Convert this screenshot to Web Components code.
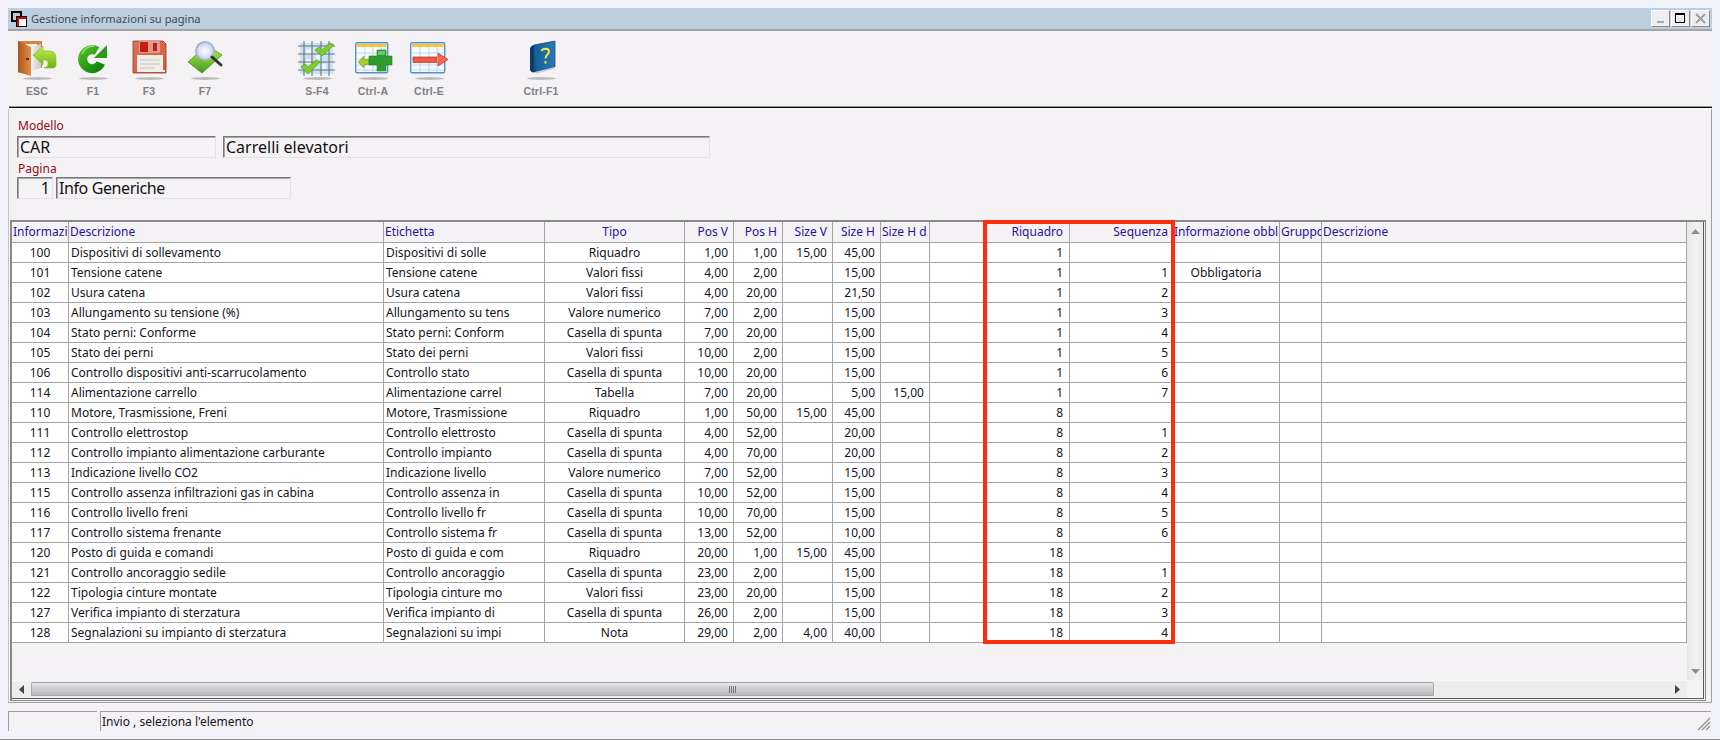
<!DOCTYPE html>
<html lang="it">
<head>
<meta charset="utf-8">
<title>Gestione informazioni su pagina</title>
<style>
    html, body { margin: 0; padding: 0; background: #f3f3fb; }
    body { width: 1720px; height: 740px; overflow: hidden; font-family: "Noto Sans", sans-serif; }
</style>
</head>
<body>
<app-window>
    <title-bar slot="title">Gestione informazioni su pagina</title-bar>
    <tool-bar slot="tools">
        <tool-button label="ESC" icon="door"></tool-button>
        <tool-button label="F1" icon="refresh"></tool-button>
        <tool-button label="F3" icon="save"></tool-button>
        <tool-button label="F7" icon="search"></tool-button>
        <tool-spacer></tool-spacer>
        <tool-button label="S-F4" icon="checks"></tool-button>
        <tool-button label="Ctrl-A" icon="add"></tool-button>
        <tool-button label="Ctrl-E" icon="remove"></tool-button>
        <tool-spacer></tool-spacer>
        <tool-button label="Ctrl-F1" icon="book"></tool-button>
    </tool-bar>
    <model-form slot="form"></model-form>
    <data-grid slot="grid"></data-grid>
    <status-bar slot="status">Invio , seleziona l'elemento</status-bar>
</app-window>

<script>
const ICONS = {
    door: `<svg viewBox="0 0 40 36" width="40" height="36">
        <defs>
            <linearGradient id="d1" x1="0" x2="1"><stop offset="0" stop-color="#a9551c"/><stop offset="1" stop-color="#e58f45"/></linearGradient>
            <linearGradient id="d2" x1="0" x2="1"><stop offset="0" stop-color="#f3f3f3"/><stop offset="1" stop-color="#c9c9c9"/></linearGradient>
            <linearGradient id="d3" x1="0" x2="0" y1="0" y2="1"><stop offset="0" stop-color="#c9ee55"/><stop offset="1" stop-color="#6ab410"/></linearGradient>
        </defs>
        <path d="M1 1H25V28H20V4H5V30L1 33Z" fill="#d9813a"/>
        <path d="M1 1L14 7V36L1 32Z" fill="url(#d1)"/>
        <path d="M14 7L24 4V28L14 31Z" fill="url(#d2)"/>
        <rect x="9" y="18" width="3" height="2" fill="#5b2c0a"/>
        <path d="M16 15L26 6V11H33C38 11 39 15 39 20V25C39 27 37 28 36 28H27C31 27 31 25 31 23C31 21 30 20 28 20H26V25Z" fill="url(#d3)" stroke="#7cb71c" stroke-width=".6"/>
    </svg>`,
    refresh: `<svg viewBox="0 0 40 36" width="40" height="36">
        <defs><linearGradient id="r1" gradientUnits="userSpaceOnUse" x1="6" y1="5" x2="30" y2="33"><stop offset="0" stop-color="#58c82c"/><stop offset="1" stop-color="#067a06"/></linearGradient></defs>
        <path d="M27.800 23A9.500 9.500 0 1 1 24 11" fill="none" stroke="url(#r1)" stroke-width="9"/>
        <path d="M34 5V18H21Z" fill="#2c9a18"/>
        <path d="M9 14C11 9 16 6 21 6" fill="none" stroke="#b3ec8a" stroke-width="1.600" opacity=".75"/>
    </svg>`,
    save: `<svg viewBox="0 0 40 36" width="40" height="36">
        <defs><linearGradient id="s1" x1="0" x2="1" y1="0" y2="1"><stop offset="0" stop-color="#e0705a"/><stop offset="1" stop-color="#d85a38"/></linearGradient></defs>
        <path d="M4 1H34L37 4V33H4Z" fill="url(#s1)" stroke="#8a3a26" stroke-width=".8"/>
        <rect x="10" y="1" width="21" height="12" fill="#d89c90"/>
        <rect x="11" y="2" width="8" height="10" fill="#c42010"/>
        <rect x="24" y="3" width="4" height="8" fill="#c42010"/>
        <rect x="8" y="15" width="26" height="17" fill="#f1eeea"/>
        <path d="M11 20H31M11 24H31M11 28H26" stroke="#c8c4be" stroke-width="1.200"/>
        <rect x="34" y="30" width="2" height="2" fill="#eee"/>
    </svg>`,
    search: `<svg viewBox="0 0 40 36" width="40" height="36">
        <defs>
            <linearGradient id="f1" x1="0" x2="0" y1="0" y2="1"><stop offset="0" stop-color="#a5e64a"/><stop offset="1" stop-color="#3f9c12"/></linearGradient>
            <radialGradient id="f2"><stop offset="0" stop-color="#ffffff"/><stop offset="1" stop-color="#c3d2f0"/></radialGradient>
        </defs>
        <path d="M3 22L11 15L17 21L29 10L37 15L17 33Z" fill="url(#f1)" stroke="#3a8a12" stroke-width=".7"/>
        <circle cx="20" cy="11" r="9" fill="url(#f2)" stroke="#a4b6c2" stroke-width="2"/>
        <path d="M27 17L36 25" stroke="#333" stroke-width="3" stroke-linecap="round"/>
    </svg>`,
    checks: `<svg viewBox="0 0 40 36" width="40" height="36">
        <rect x="3" y="3" width="33" height="31" fill="#c9e2f8"/>
        <path d="M9 9h5v5H9zM19 14h5v5h-5zM9 19h5v5H9zM24 24h5v5h-5z" fill="#eef6fd"/>
        <path d="M1 6H38M1 14H38M1 22H38M1 30H38M7 1V36M15 1V36M24 1V36M32 1V36" stroke="#6b7478" stroke-width="1.100" fill="none"/>
        <path d="M18 10L22 7L25 10L33 3L37 5L25 16Z" fill="#7ccc2a" stroke="#4c9a12" stroke-width=".6"/>
        <path d="M4 27L8 24L11 27L19 20L23 22L11 34Z" fill="#7ccc2a" stroke="#4c9a12" stroke-width=".6"/>
    </svg>`,
    add: `<svg viewBox="0 0 40 36" width="40" height="36">
        <rect x="2.700" y="2.700" width="32" height="30" rx="1.500" fill="#f8fbfe" stroke="#4f93cb" stroke-width="1.400"/>
        <rect x="4" y="4" width="29.500" height="3" fill="#f3c440"/>
        <path d="M4 13H34M4 19H34M4 25H34M4 30H34M12 7V32M20 7V32M28 7V32" stroke="#bcd4ea" stroke-width="1"/>
        <path d="M5 22L11 16V19.500H16V24.500H11V28Z" fill="#a5cc2a" stroke="#70981a" stroke-width=".6"/>
        <path d="M24 10H33V16H39V25H33V31H24V25H16V16H24Z" fill="#2f9c30" stroke="#1f7f22" stroke-width=".6"/>
        <path d="M25 11H32V15H25Z" fill="#70c46c"/>
    </svg>`,
    remove: `<svg viewBox="0 0 40 36" width="40" height="36">
        <rect x="1.700" y="2.700" width="34" height="30" rx="1.500" fill="#f8fbfe" stroke="#4f93cb" stroke-width="1.400"/>
        <rect x="3" y="4" width="31.500" height="3" fill="#f3c440"/>
        <path d="M3 13H35M3 19H35M3 25H35M3 30H35M11 7V32M20 7V32M28 7V32" stroke="#bcd4ea" stroke-width="1"/>
        <rect x="4" y="17" width="24" height="5.500" fill="#ef5a44" stroke="#c03020" stroke-width=".7"/>
        <path d="M29 17V13L39 19.500L29 26V22" fill="#f86a4c" stroke="#c03020" stroke-width=".7"/>
    </svg>`,
    book: `<svg viewBox="0 0 40 36" width="40" height="36">
        <defs><linearGradient id="b1" x1="0" x2="1"><stop offset="0" stop-color="#125f96"/><stop offset="1" stop-color="#2c7ab4"/></linearGradient></defs>
        <path d="M13 5L34 1V27L14 32Z" fill="url(#b1)" stroke="#0c3f68" stroke-width=".7"/>
        <path d="M9 8C10 6 12 5 13 5L14 32C12 33 10 32 9 30Z" fill="#0a3e6a"/>
        <path d="M14 32L34 27V28.500L15 34Z" fill="#c9ced4"/>
        <path d="M20.500 11C21.500 8 28 7.500 28 11.500C28 14.500 24.500 14.500 24.500 18.500M24.500 21V23.500" fill="none" stroke="#f2e34a" stroke-width="2"/>
    </svg>`
};

class AppWindow extends HTMLElement {
    constructor() {
        super();
        this.attachShadow({ mode: 'open' });
        this.shadowRoot.innerHTML = `
            <style>
                :host { display: block; box-sizing: border-box; width: 1720px; height: 740px; padding: 8px 8px 0 8px; border-bottom: 1px solid #8b8b8b; }
                .panel { display: flex; flex-direction: column; height: 723px; background: #f5f2f6; }
                .rule { height: 1px; background: #000; border-bottom: 1px solid #fff; box-shadow: 0 -1px 0 #9a9a9a; margin-left: 1px; }
                .lower { box-sizing: border-box; height: 593px; border-left: 1px solid #c6c6ca; border-right: 1px solid #a0a0a0; }
                .grid { padding-left: 1px; }
            </style>
            <div class="panel">
                <slot name="title"></slot>
                <slot name="tools"></slot>
                <div class="rule"></div>
                <div class="lower">
                    <slot name="form"></slot>
                    <div class="grid"><slot name="grid"></slot></div>
                </div>
                <slot name="status"></slot>
            </div>`;
    }
}

class TitleBar extends HTMLElement {
    constructor() {
        super();
        this.attachShadow({ mode: 'open' });
        this.shadowRoot.innerHTML = `
            <style>
                :host { display: flex; align-items: center; box-sizing: border-box; height: 23px; background: #bccfdf; border-bottom: 2px solid #a3a3a8; color: #454a55; font: 11.150px "Noto Sans", sans-serif; }
                .logo { width: 16px; height: 16px; margin: 0 4px 0 3px; }
                .text { flex: 1; }
                .ctl { display: flex; gap: 1px; margin-right: 2px; }
                .btn { box-sizing: border-box; width: 19px; height: 17px; background: #eeeef0; border: 1px solid; border-color: #fff #8a8a8a #8a8a8a #fff; display: flex; align-items: center; justify-content: center; }
            </style>
            <svg class="logo" viewBox="0 0 16 16">
                <rect x="1" y="1" width="9" height="9" fill="#c8c8c8" stroke="#000" stroke-width="2"/>
                <rect x="5" y="5" width="11" height="11" fill="#000"/>
                <rect x="6" y="6" width="9" height="9" fill="#d80000"/>
                <rect x="8" y="8" width="7" height="7" fill="#fff"/>
            </svg>
            <span class="text"><slot></slot></span>
            <div class="ctl">
                <div class="btn"><svg width="11" height="11"><rect x="2" y="8" width="7" height="2" fill="#a8a8a8"/></svg></div>
                <div class="btn"><svg width="13" height="13"><rect x="1.500" y="1.500" width="9" height="9" fill="none" stroke="#000"/><rect x="1" y="1" width="10" height="2" fill="#000"/></svg></div>
                <div class="btn"><svg width="11" height="11"><path d="M1 1L10 10M10 1L1 10" stroke="#a0a0a0" stroke-width="2"/></svg></div>
            </div>`;
    }
}

class ToolBar extends HTMLElement {
    constructor() {
        super();
        this.attachShadow({ mode: 'open' });
        this.shadowRoot.innerHTML = `
            <style>
                :host { display: flex; height: 76px; padding-left: 1px; }
            </style>
            <slot></slot>`;
    }
}

class ToolSpacer extends HTMLElement {
    constructor() {
        super();
        this.attachShadow({ mode: 'open' });
        this.shadowRoot.innerHTML = `<style>:host { display: block; width: 56px; }</style>`;
    }
}

class ToolButton extends HTMLElement {
    constructor() {
        super();
        this.attachShadow({ mode: 'open' });
        this.shadowRoot.innerHTML = `
            <style>
                :host { display: flex; flex-direction: column; align-items: center; width: 56px; padding-top: 9px; box-sizing: border-box; }
                .pic { height: 36px; }
                .shadow { width: 29px; height: 3px; border-radius: 50%; background: #bdbdbd; margin-top: 1px; filter: blur(.5px); }
                .label { margin-top: 5px; font: bold 10.500px "Liberation Sans", sans-serif; color: #808080; letter-spacing: .2px; }
            </style>
            <div class="pic">${ICONS[this.getAttribute('icon')]}</div>
            <div class="shadow"></div>
            <div class="label">${this.getAttribute('label')}</div>`;
    }
}

class ModelField extends HTMLElement {
    constructor() {
        super();
        this.attachShadow({ mode: 'open' });
        this.shadowRoot.innerHTML = `
            <style>
                :host { display: block; box-sizing: border-box; height: 22px; padding: 0 2px; border: 1px solid; border-color: #777 #e4e2e6 #e4e2e6 #777; box-shadow: inset 1px 1px 0 #a8a8a8; font: 16px/20px "Noto Sans", sans-serif; color: #111; white-space: nowrap; overflow: hidden; }
                :host([num]) { text-align: right; }
            </style>
            <slot></slot>`;
    }
}

class ModelForm extends HTMLElement {
    constructor() {
        super();
        this.attachShadow({ mode: 'open' });
        this.shadowRoot.innerHTML = `
            <style>
                :host { display: block; box-sizing: border-box; height: 111px; padding: 8px 0 0 8px; }
                .label { height: 17px; padding-left: 1px; color: #8e0d14; font: 12px/17px "Noto Sans", sans-serif; }
                .row { display: flex; margin-top: 2px; }
                .second { margin-top: 2px; }
                .second + .row { margin-top: 0; }
            </style>
            <div class="label">Modello</div>
            <div class="row">
                <model-field style="width:199px;margin-right:7px">CAR</model-field>
                <model-field style="width:487px">Carrelli elevatori</model-field>
            </div>
            <div class="label second">Pagina</div>
            <div class="row">
                <model-field num style="width:36px;margin-right:3px">1</model-field>
                <model-field style="width:235px;letter-spacing:-.4px">Info Generiche</model-field>
            </div>`;
    }
}

const COLUMNS = [
    { t: 'Informazi', w: 57, h: 'left', a: 'center' },
    { t: 'Descrizione', w: 315, h: 'left', a: 'left' },
    { t: 'Etichetta', w: 161, h: 'left', a: 'left' },
    { t: 'Tipo', w: 140, h: 'center', a: 'center' },
    { t: 'Pos V', w: 49, h: 'right', a: 'right' },
    { t: 'Pos H', w: 49, h: 'right', a: 'right' },
    { t: 'Size V', w: 50, h: 'right', a: 'right' },
    { t: 'Size H', w: 48, h: 'right', a: 'right' },
    { t: 'Size H d', w: 49, h: 'left', a: 'right' },
    { t: '', w: 54, h: 'left', a: 'left' },
    { t: 'Riquadro', w: 86, h: 'right', a: 'right', pad: 6 },
    { t: 'Sequenza', w: 103, h: 'right', a: 'right', pad: 4 },
    { t: 'Informazione obbl', w: 107, h: 'left', a: 'center' },
    { t: 'Gruppo', w: 42, h: 'left', a: 'left' },
    { t: 'Descrizione', w: 365, h: 'left', a: 'left' }
];

const CS = 'Casella di spunta', VF = 'Valori fissi', VN = 'Valore numerico', RQ = 'Riquadro';
const ROWS = [
    ['100', 'Dispositivi di sollevamento', 'Dispositivi di solle', RQ, '1,00', '1,00', '15,00', '45,00', '', '', '1', '', ''],
    ['101', 'Tensione catene', 'Tensione catene', VF, '4,00', '2,00', '', '15,00', '', '', '1', '1', 'Obbligatoria'],
    ['102', 'Usura catena', 'Usura catena', VF, '4,00', '20,00', '', '21,50', '', '', '1', '2', ''],
    ['103', 'Allungamento su tensione (%)', 'Allungamento su tens', VN, '7,00', '2,00', '', '15,00', '', '', '1', '3', ''],
    ['104', 'Stato perni: Conforme', 'Stato perni: Conform', CS, '7,00', '20,00', '', '15,00', '', '', '1', '4', ''],
    ['105', 'Stato dei perni', 'Stato dei perni', VF, '10,00', '2,00', '', '15,00', '', '', '1', '5', ''],
    ['106', 'Controllo dispositivi anti-scarrucolamento', 'Controllo stato', CS, '10,00', '20,00', '', '15,00', '', '', '1', '6', ''],
    ['114', 'Alimentazione carrello', 'Alimentazione carrel', 'Tabella', '7,00', '20,00', '', '5,00', '15,00', '', '1', '7', ''],
    ['110', 'Motore, Trasmissione, Freni', 'Motore, Trasmissione', RQ, '1,00', '50,00', '15,00', '45,00', '', '', '8', '', ''],
    ['111', 'Controllo elettrostop', 'Controllo elettrosto', CS, '4,00', '52,00', '', '20,00', '', '', '8', '1', ''],
    ['112', 'Controllo impianto alimentazione carburante', 'Controllo impianto', CS, '4,00', '70,00', '', '20,00', '', '', '8', '2', ''],
    ['113', 'Indicazione livello CO2', 'Indicazione livello', VN, '7,00', '52,00', '', '15,00', '', '', '8', '3', ''],
    ['115', 'Controllo assenza infiltrazioni gas in cabina', 'Controllo assenza in', CS, '10,00', '52,00', '', '15,00', '', '', '8', '4', ''],
    ['116', 'Controllo livello freni', 'Controllo livello fr', CS, '10,00', '70,00', '', '15,00', '', '', '8', '5', ''],
    ['117', 'Controllo sistema frenante', 'Controllo sistema fr', CS, '13,00', '52,00', '', '10,00', '', '', '8', '6', ''],
    ['120', 'Posto di guida e comandi', 'Posto di guida e com', RQ, '20,00', '1,00', '15,00', '45,00', '', '', '18', '', ''],
    ['121', 'Controllo ancoraggio sedile', 'Controllo ancoraggio', CS, '23,00', '2,00', '', '15,00', '', '', '18', '1', ''],
    ['122', 'Tipologia cinture montate', 'Tipologia cinture mo', VF, '23,00', '20,00', '', '15,00', '', '', '18', '2', ''],
    ['127', 'Verifica impianto di sterzatura', 'Verifica impianto di', CS, '26,00', '2,00', '', '15,00', '', '', '18', '3', ''],
    ['128', 'Segnalazioni su impianto di sterzatura', 'Segnalazioni su impi', 'Nota', '29,00', '2,00', '4,00', '40,00', '', '', '18', '4', '']
];

// centred cells get even padding, right aligned ones take the column's own gap
function cellStyle(align, col) {
    if (align === 'center') return 'text-align:center;padding:0 3px';
    if (align === 'right') return `text-align:right;padding-right:${col.pad || 5}px`;
    return 'text-align:left';
}

class DataGrid extends HTMLElement {
    constructor() {
        super();
        this.attachShadow({ mode: 'open' });
        const cols = COLUMNS.map(c => `<col style="width:${c.w}px">`).join('');
        const head = COLUMNS.map(c => `<th style="${cellStyle(c.h, c)}">${c.t}</th>`).join('');
        const body = ROWS.map(r => '<tr>' + COLUMNS.map((c, i) => `<td style="${cellStyle(c.a, c)}">${r[i] || ''}</td>`).join('') + '</tr>').join('');
        this.shadowRoot.innerHTML = `
            <style>
                :host { display: block; position: relative; box-sizing: border-box; width: 1696px; height: 481px; border: solid #8a8a8a; border-width: 2px 1px 1px 2px; padding: 0 1px 1px 0; font: 12px "Noto Sans", sans-serif; }
                .frame { display: grid; box-sizing: border-box; height: 100%; grid-template-columns: 1675px 16px; grid-template-rows: 458px 18px; border-right: 1px solid #5a5a5a; border-bottom: 1px solid #5a5a5a; }
                .view { overflow: hidden; }
                table { border-collapse: separate; border-spacing: 0; table-layout: fixed; width: 1675px; }
                th, td { box-sizing: border-box; padding: 0 5px 0 2px; border-right: 1px solid #a4a4a4; border-bottom: 1px solid #a4a4a4; white-space: nowrap; overflow: hidden; font-weight: normal; }
                th { height: 21px; line-height: 20px; background: #f5f2f6; color: #2a1196; padding-left: 1px; }
                td { height: 20px; line-height: 19px; background: #fff; color: #14141e; }
                .vbar { background: linear-gradient(90deg, #e8e8e8, #f2f0f2 55%, #ebebeb); display: flex; flex-direction: column; justify-content: space-between; align-items: center; padding: 7px 0 5px; box-sizing: border-box; }
                .vbar svg { display: block; }
                .hbar { display: flex; align-items: flex-start; box-sizing: border-box; height: 18px; padding-top: 1px; background: #ededed; border-top: 1px solid #f8f8f8; }
                .arrow { width: 19px; height: 14px; display: flex; justify-content: center; align-items: center; flex: none; }
                .thumb { flex: none; width: 1403px; height: 14px; box-sizing: border-box; border: 1px solid #a8a8a8; border-radius: 2px 2px 0 0; background: linear-gradient(#e6e6ea, #cfcfd4 45%, #babac0); display: flex; justify-content: center; align-items: center; }
                .grip { width: 7px; height: 7px; background: repeating-linear-gradient(90deg, #777 0 1px, transparent 1px 2px); }
                .fill { flex: 1; }
                .corner { background: #f5f2f6; }
                .mark { position: absolute; left: 971px; top: -2px; width: 192px; height: 424px; box-sizing: border-box; border: 4px solid #ff2d0b; pointer-events: none; }
            </style>
            <div class="frame">
                <div class="view">
                    <table>
                        <colgroup>${cols}</colgroup>
                        <thead><tr>${head}</tr></thead>
                        <tbody>${body}</tbody>
                    </table>
                </div>
                <div class="vbar">
                    <svg width="9" height="6"><path d="M4.500 0L9 5H0Z" fill="#8d8d8d"/></svg>
                    <svg width="9" height="6"><path d="M0 0H9L4.500 5Z" fill="#8d8d8d"/></svg>
                </div>
                <div class="hbar">
                    <div class="arrow"><svg width="6" height="9"><path d="M0 4.500L5 0V9Z" fill="#444"/></svg></div>
                    <div class="thumb"><div class="grip"></div></div>
                    <div class="fill"></div>
                    <div class="arrow" style="width:18px"><svg width="6" height="9"><path d="M5 4.500L0 0V9Z" fill="#444"/></svg></div>
                </div>
                <div class="corner"></div>
            </div>
            <div class="mark"></div>`;
    }
}

class StatusBar extends HTMLElement {
    constructor() {
        super();
        this.attachShadow({ mode: 'open' });
        this.shadowRoot.innerHTML = `
            <style>
                :host { display: flex; flex: none; height: 29px; box-sizing: border-box; padding-top: 8px; position: relative; border-top: 1px solid #a0a0a0; font: 12px "Noto Sans", sans-serif; color: #14141e; }
                .cell { box-sizing: border-box; height: 20px; line-height: 20px; border-top: 1px solid #a0a0a0; border-left: 1px solid #a0a0a0; background: #f5f2f6; }
                .a { width: 89px; margin-right: 3px; }
                .b { flex: 1; padding-left: 1px; margin-right: 1px; }
                .resize { position: absolute; right: 1px; bottom: 0; }
            </style>
            <div class="cell a"></div>
            <div class="cell b"><slot></slot></div>
            <svg class="resize" width="14" height="14"><path d="M1 13L13 1M5 13L13 5M9 13L13 9" stroke="#8d8d8d" stroke-width="1.200"/></svg>`;
    }
}

customElements.define('app-window', AppWindow);
customElements.define('title-bar', TitleBar);
customElements.define('tool-bar', ToolBar);
customElements.define('tool-spacer', ToolSpacer);
customElements.define('tool-button', ToolButton);
customElements.define('model-field', ModelField);
customElements.define('model-form', ModelForm);
customElements.define('data-grid', DataGrid);
customElements.define('status-bar', StatusBar);
</script>
</body>
</html>
